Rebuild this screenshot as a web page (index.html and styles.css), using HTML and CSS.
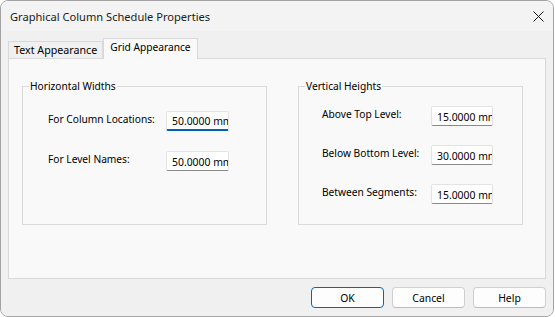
FILE: index.html
```html
<!DOCTYPE html>
<html lang="en">
<head>
    <meta charset="UTF-8">
    <title>Graphical Column Schedule Properties</title>
    <link rel="stylesheet" href="styles.css">
</head>
<body>
    <div class="window">
        <div class="titlebar">
            <span class="title">Graphical Column Schedule Properties</span>
            <button class="close" aria-label="Close">
                <svg width="11" height="11" viewBox="0 0 11 11">
                    <path d="M0.5 0.5 L10.5 10.5 M10.5 0.5 L0.5 10.5" stroke="#1a1a1a" stroke-width="1" fill="none"/>
                </svg>
            </button>
        </div>

        <div class="content">
            <div class="tabs">
                <div class="tab">Text Appearance</div>
                <div class="tab active">Grid Appearance</div>
            </div>

            <div class="panel">
                <fieldset class="group group-left">
                    <legend>Horizontal Widths</legend>
                    <div class="rows">
                        <label for="colLoc">For Column Locations:</label>
                        <input type="text" id="colLoc" class="field focused" value="50.0000 mm">
                        <label for="levelNames">For Level Names:</label>
                        <input type="text" id="levelNames" class="field" value="50.0000 mm">
                    </div>
                </fieldset>

                <fieldset class="group group-right">
                    <legend>Vertical Heights</legend>
                    <div class="rows">
                        <label for="aboveTop">Above Top Level:</label>
                        <input type="text" id="aboveTop" class="field" value="15.0000 mm">
                        <label for="belowBottom">Below Bottom Level:</label>
                        <input type="text" id="belowBottom" class="field" value="30.0000 mm">
                        <label for="between">Between Segments:</label>
                        <input type="text" id="between" class="field" value="15.0000 mm">
                    </div>
                </fieldset>
            </div>

            <div class="footer">
                <button class="btn primary">OK</button>
                <button class="btn">Cancel</button>
                <button class="btn">Help</button>
            </div>
        </div>
    </div>
</body>
</html>
```

FILE: styles.css
```css
* {
    box-sizing: border-box;
}

body {
    margin: 0;
    padding: 0;
    background: #ffffff;
    font-family: "Segoe UI", "Noto Sans", sans-serif;
    font-size: 10.2px;
    color: #000;
}

.window {
    width: 554px;
    height: 317px;
    border: 1px solid #a3a3a3;
    border-radius: 8px;
    overflow: hidden;
    display: flex;
    flex-direction: column;
    background: #f0f0f0;
}

.titlebar {
    height: 30px;
    flex-shrink: 0;
    display: flex;
    align-items: center;
    justify-content: space-between;
    padding: 0 8px 0 9px;
    background: #f3f3f3;
}

.title {
    color: #1a1a1a;
    font-size: 11.1px;
}

.close {
    background: none;
    border: none;
    padding: 0;
    margin-right: 1px;
    width: 11px;
    height: 11px;
    display: flex;
}

.content {
    flex: 1;
    display: flex;
    flex-direction: column;
    padding: 7px 7px 0 7px;
    background: #f0f0f0;
}

.tabs {
    display: flex;
    align-items: flex-end;
    height: 20px;
}

.tab {
    height: 17px;
    padding: 0 5px;
    border: 1px solid #d9d9d9;
    border-bottom: none;
    background: #f0f0f0;
    font-size: 10.7px;
    line-height: 17px;
    white-space: nowrap;
}

.tab.active {
    height: 21px;
    margin-bottom: -1px;
    padding: 0 6px;
    background: #f9f9f9;
    font-size: 10.2px;
    line-height: 16px;
    position: relative;
    z-index: 1;
}

.panel {
    height: 221px;
    border: 1px solid #d9d9d9;
    background: #f9f9f9;
    display: flex;
    align-items: flex-start;
    padding: 20px 0 0 13px;
    gap: 31px;
}

.group {
    margin: 0;
    border: 1px solid #d9d9d9;
    padding: 0;
    min-width: 0;
}

.group legend {
    margin-left: 6px;
    padding: 0 1px;
    line-height: 14px;
}

.group-left {
    width: 245px;
    height: 146px;
}

.group-right {
    width: 225px;
    height: 146px;
}

.rows {
    display: grid;
    align-items: center;
    white-space: nowrap;
}

.group-left .rows {
    grid-template-columns: 118px 63px;
    row-gap: 20px;
    padding: 18px 0 0 25px;
}

.group-right .rows {
    grid-template-columns: 109px 62px;
    row-gap: 19px;
    padding: 13px 0 0 23px;
}

.rows label {
    padding-bottom: 4px;
}

.group-right .rows label {
    padding-bottom: 5px;
}

.field {
    height: 20px;
    width: 100%;
    border: 1px solid #e3e3e3;
    border-bottom-color: #8a8a8a;
    border-radius: 2px;
    background: #fff;
    font-family: inherit;
    font-size: 10.4px;
    color: #000;
    padding: 1px 0 0 5px;
    outline: none;
}

.field.focused {
    border-bottom: 2px solid #005fb8;
}

.footer {
    flex: 1;
    display: flex;
    justify-content: flex-end;
    align-items: flex-start;
    gap: 8px;
    padding: 8px 0 0 0;
}

.btn {
    width: 73px;
    height: 21px;
    border: 1px solid #d0d0d0;
    border-bottom-color: #bcbcbc;
    border-radius: 4px;
    background: #fdfdfd;
    font-family: inherit;
    font-size: 10.4px;
    color: #000;
    padding: 0;
}

.btn.primary {
    border: 1px solid #0067c0;
}
```
